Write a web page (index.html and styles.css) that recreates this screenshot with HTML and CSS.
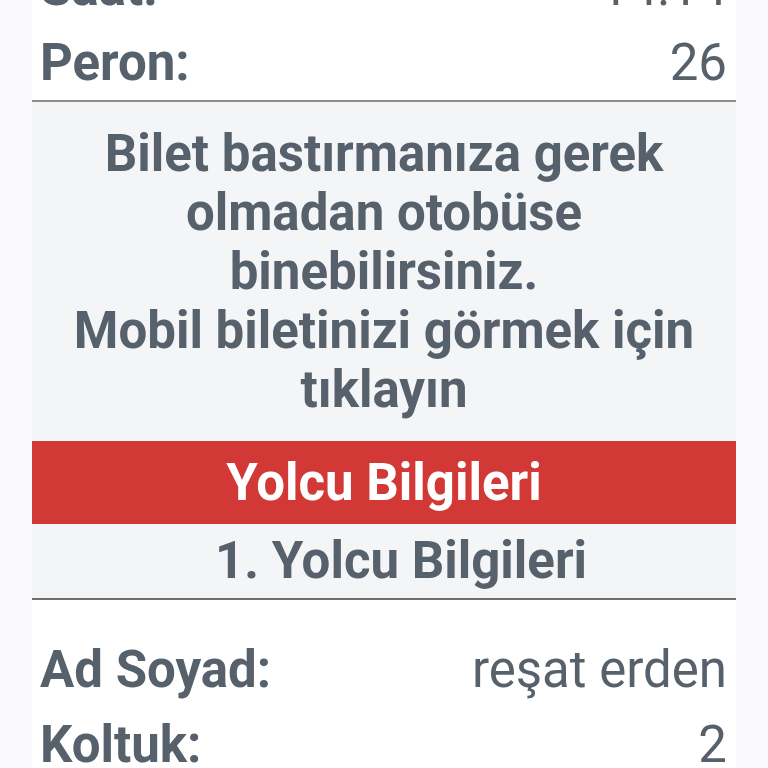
FILE: index.html
```html
<!DOCTYPE html>
<html lang="tr">
<head>
<meta charset="utf-8">
<title>Bilet Detayı</title>
<link rel="stylesheet" href="styles.css">
</head>
<body>
<div class="page">
  <div class="info-list">
    <div class="row"><span class="label">Saat:</span><span class="value">14:14</span></div>
    <div class="row"><span class="label">Peron:</span><span class="value">26</span></div>
  </div>
  <div class="notice">Bilet bastırmanıza gerek olmadan otobüse binebilirsiniz.<br>Mobil biletinizi görmek için tıklayın</div>
  <div class="section-title">Yolcu Bilgileri</div>
  <div class="sub-title">1. Yolcu Bilgileri</div>
  <div class="info-list passenger">
    <div class="row"><span class="label">Ad Soyad:</span><span class="value">reşat erden</span></div>
    <div class="row"><span class="label">Koltuk:</span><span class="value">2</span></div>
  </div>
</div>
</body>
</html>
```
FILE: styles.css
```css
html, body {
  margin: 0;
  padding: 0;
  background: #f8f8fd;
}
body {
  font-family: Roboto, "Liberation Sans", sans-serif;
  color: #56616b;
}
.page {
  width: 704px;
  margin: -50px auto 0;
  background: #ffffff;
  min-height: 900px;
}
.info-list {
  border-bottom: 2px solid #8d8d8d;
}
.row {
  display: flex;
  justify-content: space-between;
  align-items: baseline;
  padding: 0 9px 0 8px;
  font-size: 51px;
  line-height: 75px;
}
.label {
  font-weight: 700;
}
.value {
  font-weight: 400;
}
.notice {
  background: #f4f5f7;
  text-align: center;
  font-weight: 700;
  font-size: 51px;
  line-height: 59px;
  padding: 22px 16px 22px;
}
.section-title {
  background: #d23835;
  color: #ffffff;
  text-align: center;
  font-weight: 700;
  font-size: 51px;
  line-height: 83px;
}
.sub-title {
  background: #f4f5f7;
  text-align: center;
  font-weight: 700;
  font-size: 51px;
  line-height: 74px;
  padding-left: 34px;
  border-bottom: 2px solid #6e6e6e;
}
.passenger {
  border-bottom: none;
  padding-top: 32px;
}
```
